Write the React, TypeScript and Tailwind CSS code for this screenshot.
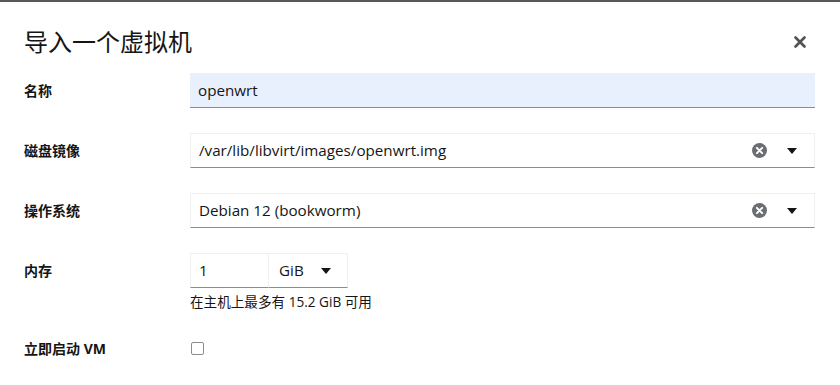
import React from 'react';

const font = { fontFamily: '"Open Sans", "Noto Sans CJK SC", sans-serif' };

const Caret = () => (
  <svg width="10" height="6" viewBox="0 0 10 6" className="shrink-0">
    <path d="M0 0 H10 L5 6 Z" fill="#151515" />
  </svg>
);

const ClearIcon = () => (
  <svg width="15" height="15" viewBox="0 0 16 16" className="shrink-0">
    <circle cx="8" cy="8" r="8" fill="#6a6e73" />
    <path d="M5.2 5.2 L10.8 10.8 M10.8 5.2 L5.2 10.8" stroke="#fff" strokeWidth="2.2" strokeLinecap="round" />
  </svg>
);

const Label: React.FC<{ children: React.ReactNode }> = ({ children }) => (
  <div className="h-[35px] flex items-center text-[14px] font-bold text-[#151515]">{children}</div>
);

const SelectBox: React.FC<{ value: string }> = ({ value }) => (
  <div className="h-[35px] flex items-center border border-[#f0f0f0] border-b-[#8a8d90] bg-white">
    <span className="flex-1 pl-2 text-[15.2px] text-[#151515] truncate">{value}</span>
    <button className="w-[30px] h-full flex items-center justify-center">
      <ClearIcon />
    </button>
    <button className="w-[40px] h-full flex items-center justify-center pr-[4px]">
      <Caret />
    </button>
  </div>
);

export default function App() {
  return (
    <div className="w-[840px] h-[385px] overflow-hidden bg-white text-[#151515]" style={font}>
      <div className="h-[2px] bg-[#585858]" />
      <div className="flex items-center justify-between pl-6 pr-[34px] pt-6">
        <h1 className="text-[24px] leading-[32px] font-normal">导入一个虚拟机</h1>
        <button className="w-3 h-3 flex items-center justify-center">
          <svg width="12" height="12" viewBox="0 0 12 12">
            <path d="M1.5 1.5 L10.5 10.5 M10.5 1.5 L1.5 10.5" stroke="#4f5255" strokeWidth="2.6" strokeLinecap="round" />
          </svg>
        </button>
      </div>

      <div className="mt-[15px] pl-6 pr-[25px] grid grid-cols-[166px_1fr] gap-y-[25px] items-start">
        <Label>名称</Label>
        <div className="h-[35px] flex items-center bg-[#e8f0fe] border-b border-[#8a8d90] pl-2 text-[15.2px]">
          openwrt
        </div>

        <Label>磁盘镜像</Label>
        <SelectBox value="/var/lib/libvirt/images/openwrt.img" />

        <Label>操作系统</Label>
        <SelectBox value="Debian 12 (bookworm)" />

        <Label>内存</Label>
        <div>
          <div className="flex">
            <div className="w-[79px] h-[35px] flex items-center border border-[#f0f0f0] border-b-[#8a8d90] pl-2 text-[15.2px]">
              1
            </div>
            <div className="w-[79px] h-[35px] flex items-center border border-l-0 border-[#f0f0f0] border-b-[#8a8d90] pl-[10px] pr-4 text-[15.2px]">
              <span className="flex-1">GiB</span>
              <Caret />
            </div>
          </div>
          <div className="mt-[5px] text-[13.6px] leading-[18px]">在主机上最多有 15.2 GiB 可用</div>
        </div>

        <div className="h-[24px] flex items-center text-[14px] font-bold">立即启动 VM</div>
        <div className="h-[24px] flex items-center pl-px">
          <span className="w-[13px] h-[13px] rounded-[2px] border border-[#8a8d90] bg-white" />
        </div>
      </div>
    </div>
  );
}
